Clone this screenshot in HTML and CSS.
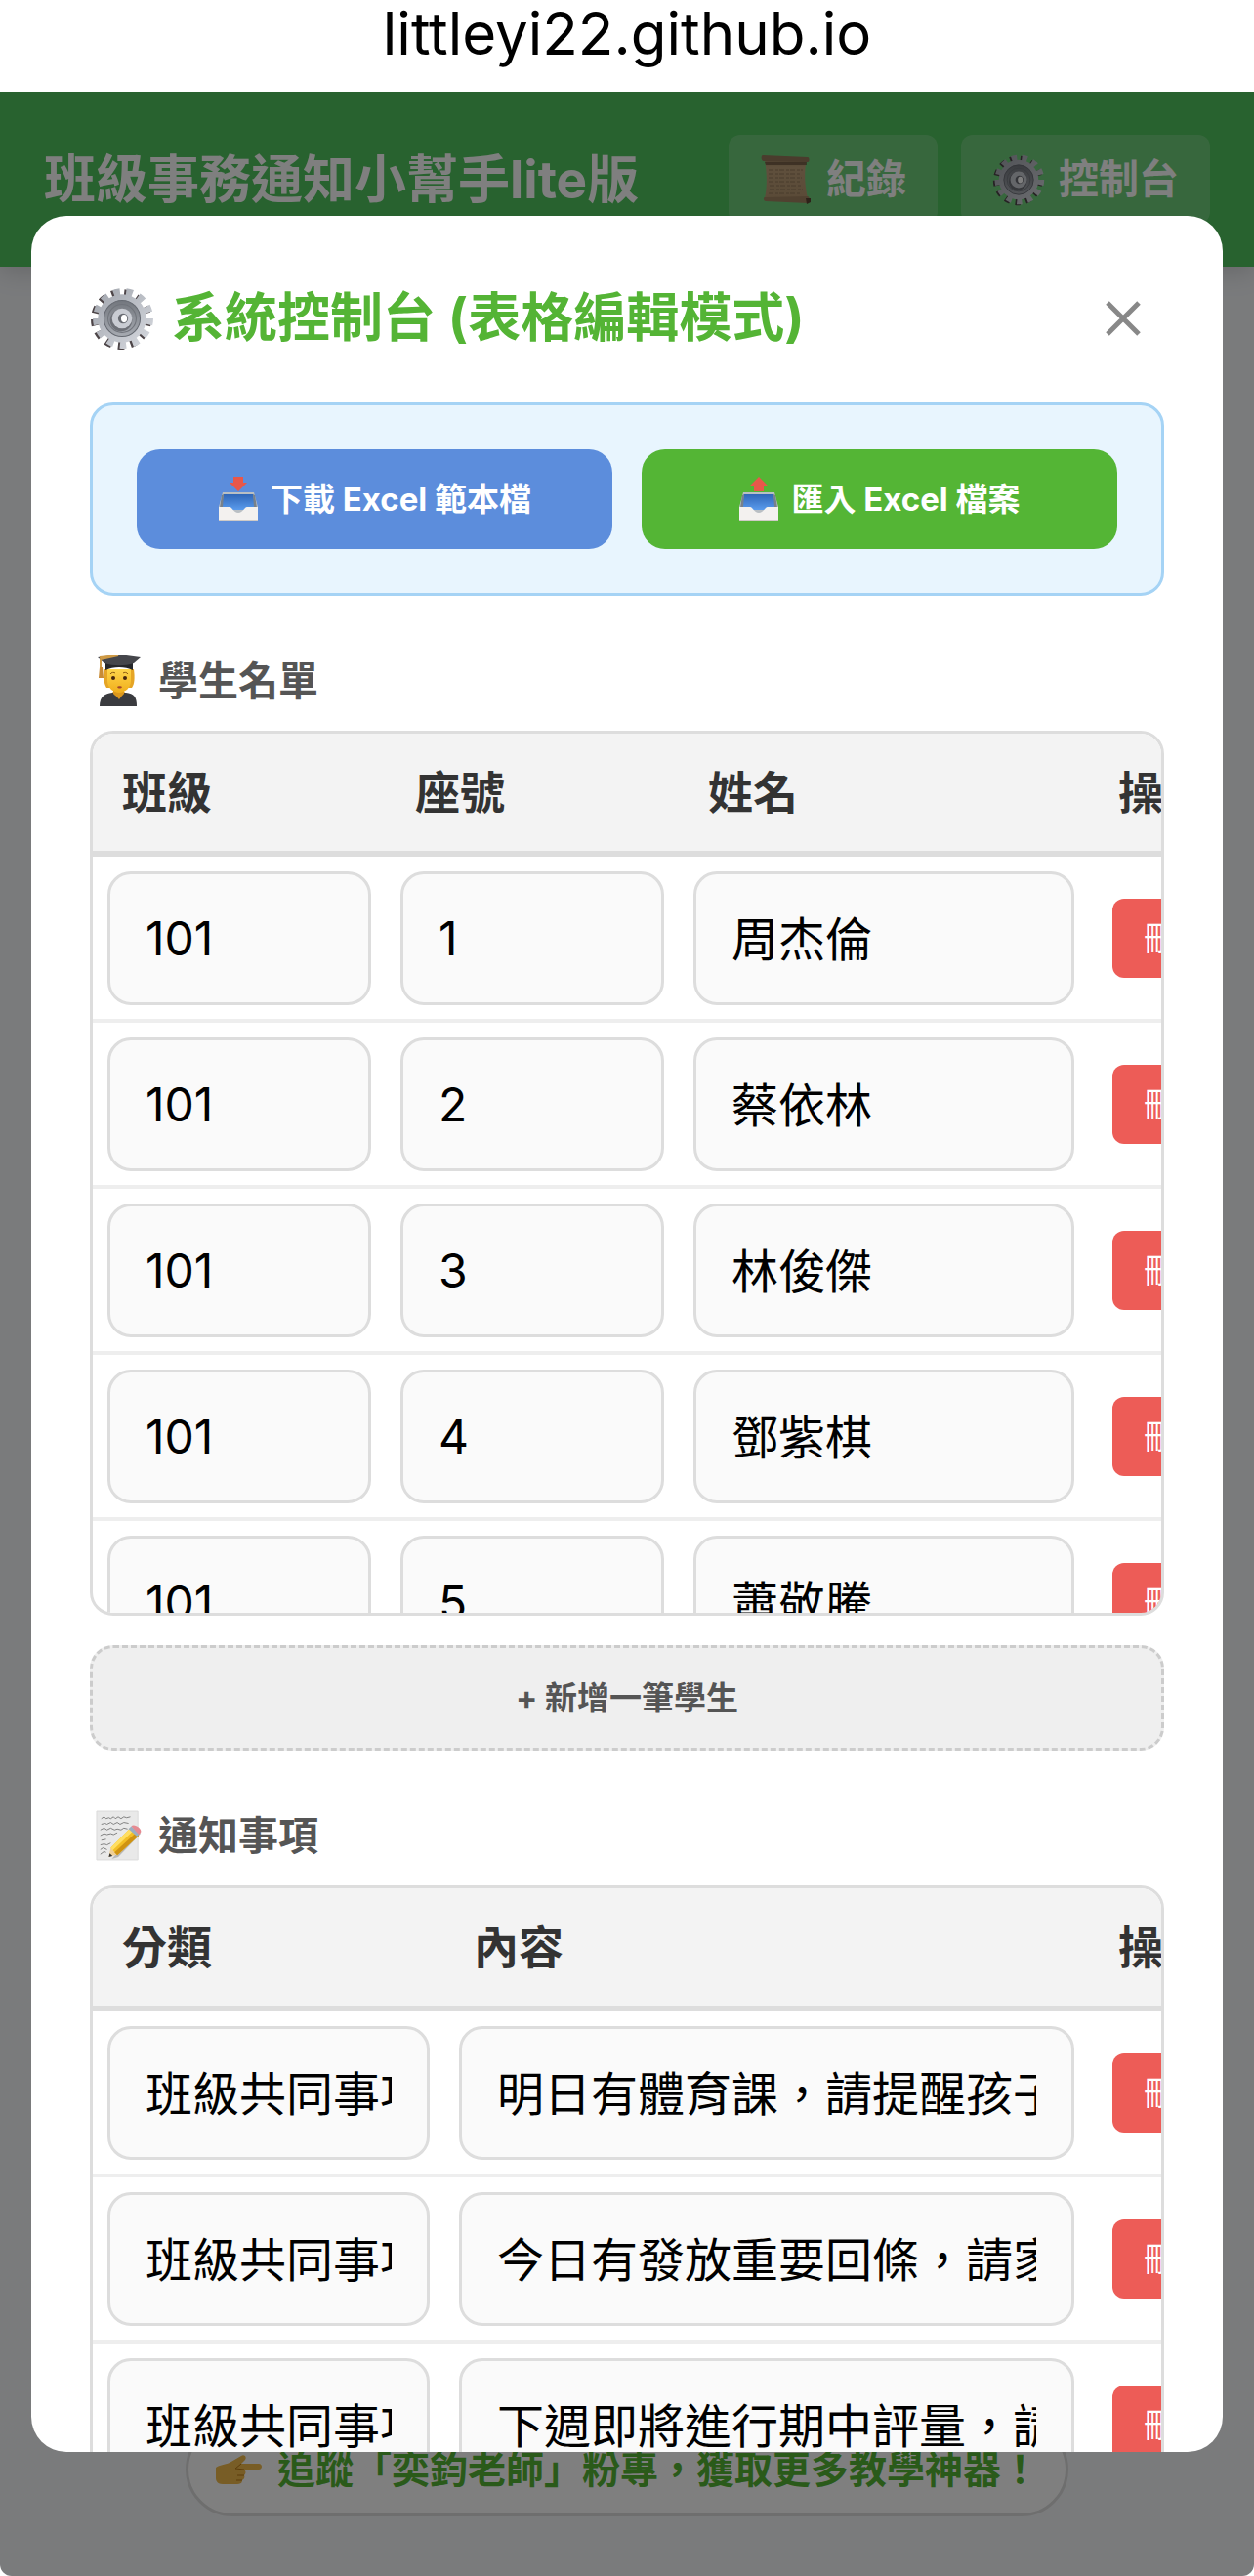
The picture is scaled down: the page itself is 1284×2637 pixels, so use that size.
FILE: index.html
```html
<!DOCTYPE html>
<html lang="zh-Hant">
<head>
  <meta charset="UTF-8" />
  <meta name="viewport" content="width=device-width, initial-scale=1" />
  <title>班級事務通知小幫手lite版</title>
  <link rel="stylesheet" href="styles.css">
</head>
<body>

  <!-- Shared icons -->
  <svg class="sprite" aria-hidden="true">
    <defs>
      <linearGradient id="metal" x1="0" y1="0" x2="1" y2="1">
        <stop offset="0" stop-color="#a4a8b0" />
        <stop offset="1" stop-color="#d3d6dc" />
      </linearGradient>
      <linearGradient id="ring" x1="0" y1="0" x2="0" y2="1">
        <stop offset="0" stop-color="#73777e" />
        <stop offset="1" stop-color="#a7abb2" />
      </linearGradient>
      <linearGradient id="paper" x1="0" y1="0" x2="0" y2="1">
        <stop offset="0" stop-color="#9a8060" />
        <stop offset="0.2" stop-color="#bfa07a" />
        <stop offset="1" stop-color="#b5966f" />
      </linearGradient>
      <linearGradient id="trayBlue" x1="0" y1="0" x2="0" y2="1">
        <stop offset="0" stop-color="#2f66b8" />
        <stop offset="1" stop-color="#5a9bec" />
      </linearGradient>
      <linearGradient id="skin" x1="0" y1="0" x2="0" y2="1">
        <stop offset="0" stop-color="#ffd54a" />
        <stop offset="1" stop-color="#f0ae1c" />
      </linearGradient>
    </defs>

    <symbol id="icon-gear" viewBox="0 0 64 64">
      <g fill="none" stroke-width="10">
        <circle cx="31" cy="33" r="25" stroke="#4d4548" pathLength="26" stroke-dasharray="1 1" />
        <circle cx="33" cy="32" r="25" stroke="url(#metal)" pathLength="26" stroke-dasharray="1 1" />
      </g>
      <circle cx="32" cy="32" r="24" fill="url(#metal)" />
      <circle cx="32" cy="32" r="18" fill="url(#ring)" stroke="#666a72" stroke-width="1" />
      <circle cx="32" cy="32" r="14" fill="none" stroke="#70747b" stroke-width="1" />
      <circle cx="31" cy="34" r="11" fill="#6d7077" />
      <circle cx="32" cy="32" r="10" fill="#c9ccd3" />
      <circle cx="33" cy="32" r="5" fill="#686b72" />
      <ellipse cx="34" cy="32" rx="3" ry="4" fill="#fff" />
    </symbol>

    <symbol id="icon-scroll" viewBox="0 0 54 54">
      <path d="M5 6h43c-3 12-2 27 1 40H5c3-13 2-27 0-40z" fill="url(#paper)" />
      <path d="M3 2l46 2c2 0 2 5 0 5L4 8C1 8 1 2 3 2z" fill="#94785a" />
      <path d="M5 9h43v3H6z" fill="#66503a" opacity=".7" />
      <path d="M5 45l44-1c2 0 3 6 0 7L6 49c-2 0-3-4-1-4z" fill="#a18360" />
      <path d="M47 46h5v4l-4 2z" fill="#5b4533" />
      <path d="M9 17h35M9 21h33M9 25h34M9 29h33M10 33h32M10 37h34M9 41h32" fill="none" stroke="#92785a" stroke-width="1" stroke-dasharray="5 2 3 1" />
    </symbol>

    <symbol id="icon-tray" viewBox="0 0 42 30">
      <path d="M5 0h32l4 15v14H1V15z" fill="#b9bfc4" />
      <path d="M6 2h30l3 16H3z" fill="url(#trayBlue)" />
      <path d="M4 3l2-1-1 13-3 1zM38 3l-2-1 1 13 3 1z" fill="#77818b" />
      <path d="M1 15h11c3 0 4 6 9 6s6-6 9-6h11v14H1z" fill="#f3f1ef" />
      <path d="M1 28h40v1H1z" fill="#cfcac6" />
    </symbol>

    <symbol id="icon-inbox" viewBox="0 0 42 48">
      <path d="M16 1h10v6h4l-9 9-9-9h4z" fill="#e8574a" />
      <use href="#icon-tray" x="0" y="17" width="42" height="30" />
    </symbol>

    <symbol id="icon-outbox" viewBox="0 0 42 48">
      <path d="M16 16h10v-6h4l-9-9-9 9h4z" fill="#e8574a" />
      <use href="#icon-tray" x="0" y="17" width="42" height="30" />
    </symbol>

    <symbol id="icon-student" viewBox="0 0 48 54">
      <path d="M4 53c0-10 5-13 13-14h14c8 1 11 4 11 14z" fill="#3a3b3f" />
      <path d="M17 38h13l-6 8z" fill="#e0981d" />
      <path d="M18 33h11v7c-3 4-8 4-11 0z" fill="#dc981c" />
      <path d="M9 15h30c1 8 1 15-2 19H11c-3-5-3-12-2-19z" fill="#e5a526" />
      <path d="M12 15h24v12c0 7-6 12-12 12s-12-5-12-12z" fill="url(#skin)" />
      <circle cx="18" cy="24" r="2" fill="#47260d" />
      <circle cx="30" cy="24" r="2" fill="#47260d" />
      <path d="M15 20c1-2 4-2 5-1M28 19c1-1 4-1 5 1" fill="none" stroke="#8b5a12" stroke-width="1" />
      <path d="M22 33c1-1 4-1 5 0-1 2-4 2-5 0z" fill="#a4452a" />
      <path d="M10 7h28v9c-8-4-20-4-28 0z" fill="#25262a" />
      <path d="M2 3l22-3 22 3-7 6c-9 3-21 3-30 0z" fill="#45464b" />
      <path d="M4 3l19-2-18 4v9" fill="none" stroke="#cf9a45" stroke-width="2" />
      <path d="M4 13h3l1 11H3z" fill="#c98b35" />
    </symbol>

    <symbol id="icon-memo" viewBox="0 0 50 54">
      <path d="M1 1h44v52H1z" fill="#e9e9e9" stroke="#dadada" stroke-width="1" />
      <path d="M6 9l3-2 2 2 3-1 2 1 3-2 2 2 3-2 3 2 3-2 3 1 4-1M6 15l4-1 2 1 4-2 3 2 4-2 3 2 4-2 5 1M5 21l4-2 3 2 4-2 4 2 3-1 4 1 3-2 4 1M5 27l4-2 3 1 4-1 3 1 4-2M6 32l5-1M5 37l4-1 3 1 4-2M5 42l3-2 4 2M5 47l4-3 2 1" fill="none" stroke="#7d7d7d" stroke-width="1" />
      <path d="M17 52l7-2 24-25-3-3z" fill="#888" opacity=".5" />
      <path d="M14 50l2-10 7 7z" fill="#efcf97" />
      <path d="M14 50l1-4 3 3z" fill="#333" />
      <path d="M16 40l21-21 9 8-23 21z" fill="#f3bf26" />
      <path d="M16 40l21-21 3 3-22 21z" fill="#ffdf63" />
      <path d="M20 45l23-21 3 3-23 21z" fill="#cf9313" />
      <path d="M35 20l3-3 9 8-3 3z" fill="#9caec0" />
      <path d="M38 17c3-3 12 3 10 7l-2 2z" fill="#e58a91" />
    </symbol>

    <symbol id="icon-hand" viewBox="0 0 48 32">
      <path d="M1 14c4-3 9-3 14-5L27 2c3-2 6 1 4 4l-4 4h18c4 0 4 6 0 6H30c2 2 2 4 0 6 1 2 0 4-2 5 0 3-2 4-5 4H8c-5 0-7-3-7-6z" fill="#f0bb4c" />
      <path d="M27 10l-6 5 9 1M30 22h-7M28 27h-6" fill="none" stroke="#b87814" stroke-width="1" />
    </symbol>
  </svg>

  <div class="address-bar">littleyi22.github.io</div>

  <div class="app">
    <header class="app-header">
      <h1>班級事務通知小幫手lite版</h1>
      <div class="header-actions">
        <button type="button" class="header-btn"><svg class="header-icon"><use href="#icon-scroll" /></svg>紀錄</button>
        <button type="button" class="header-btn"><svg class="header-icon"><use href="#icon-gear" /></svg>控制台</button>
      </div>
    </header>

    <footer class="app-footer">
      <a class="follow-link" href="#"><svg class="hand-icon"><use href="#icon-hand" /></svg>追蹤「奕鈞老師」粉專，獲取更多教學神器！</a>
    </footer>

    <!-- Control panel -->
    <div class="overlay">
      <div class="modal" role="dialog" aria-labelledby="modalTitle">
        <div class="modal-header">
          <h2 id="modalTitle"><svg class="title-icon"><use href="#icon-gear" /></svg>系統控制台 (表格編輯模式)</h2>
          <button type="button" class="close-btn" aria-label="關閉">
            <svg class="close-icon" viewBox="0 0 36 36"><path d="M2 2l32 32M34 2L2 34" fill="none" stroke="#888" stroke-width="5" /></svg>
          </button>
        </div>

        <div class="excel-box">
          <button type="button" class="excel-btn download"><svg class="tray-icon"><use href="#icon-inbox" /></svg>下載 Excel 範本檔</button>
          <button type="button" class="excel-btn import"><svg class="tray-icon"><use href="#icon-outbox" /></svg>匯入 Excel 檔案</button>
        </div>

        <h3 class="section-title"><svg class="section-icon"><use href="#icon-student" /></svg>學生名單</h3>
        <div class="table-box">
          <table>
            <colgroup><col class="col-short"><col class="col-short"><col><col class="col-action"></colgroup>
            <thead>
              <tr><th>班級</th><th>座號</th><th>姓名</th><th>操作</th></tr>
            </thead>
            <tbody>
              <tr>
                <td><input type="text" value="101" aria-label="班級"></td>
                <td><input type="text" value="1" aria-label="座號"></td>
                <td><input type="text" class="text-field" value="周杰倫" aria-label="姓名"></td>
                <td class="action"><button type="button" class="delete-btn">刪除</button></td>
              </tr>
              <tr>
                <td><input type="text" value="101" aria-label="班級"></td>
                <td><input type="text" value="2" aria-label="座號"></td>
                <td><input type="text" class="text-field" value="蔡依林" aria-label="姓名"></td>
                <td class="action"><button type="button" class="delete-btn">刪除</button></td>
              </tr>
              <tr>
                <td><input type="text" value="101" aria-label="班級"></td>
                <td><input type="text" value="3" aria-label="座號"></td>
                <td><input type="text" class="text-field" value="林俊傑" aria-label="姓名"></td>
                <td class="action"><button type="button" class="delete-btn">刪除</button></td>
              </tr>
              <tr>
                <td><input type="text" value="101" aria-label="班級"></td>
                <td><input type="text" value="4" aria-label="座號"></td>
                <td><input type="text" class="text-field" value="鄧紫棋" aria-label="姓名"></td>
                <td class="action"><button type="button" class="delete-btn">刪除</button></td>
              </tr>
              <tr>
                <td><input type="text" value="101" aria-label="班級"></td>
                <td><input type="text" value="5" aria-label="座號"></td>
                <td><input type="text" class="text-field" value="蕭敬騰" aria-label="姓名"></td>
                <td class="action"><button type="button" class="delete-btn">刪除</button></td>
              </tr>
            </tbody>
          </table>
        </div>
        <button type="button" class="add-btn">+ 新增一筆學生</button>

        <h3 class="section-title"><svg class="section-icon"><use href="#icon-memo" /></svg>通知事項</h3>
        <div class="table-box">
          <table>
            <colgroup><col class="col-type"><col><col class="col-action"></colgroup>
            <thead>
              <tr><th>分類</th><th>內容</th><th>操作</th></tr>
            </thead>
            <tbody>
              <tr>
                <td><input type="text" class="text-field" value="班級共同事項" aria-label="分類"></td>
                <td><input type="text" class="text-field" value="明日有體育課，請提醒孩子" aria-label="內容"></td>
                <td class="action"><button type="button" class="delete-btn">刪除</button></td>
              </tr>
              <tr>
                <td><input type="text" class="text-field" value="班級共同事項" aria-label="分類"></td>
                <td><input type="text" class="text-field" value="今日有發放重要回條，請家長" aria-label="內容"></td>
                <td class="action"><button type="button" class="delete-btn">刪除</button></td>
              </tr>
              <tr>
                <td><input type="text" class="text-field" value="班級共同事項" aria-label="分類"></td>
                <td><input type="text" class="text-field" value="下週即將進行期中評量，請" aria-label="內容"></td>
                <td class="action"><button type="button" class="delete-btn">刪除</button></td>
              </tr>
            </tbody>
          </table>
        </div>
      </div>
    </div>
  </div>

</body>
</html>
```

FILE: styles.css
```css
* {
  box-sizing: border-box;
}

body {
  margin: 0;
  height: 100vh;
  display: flex;
  flex-direction: column;
  background: white;
  font-family: Inter, "Noto Sans CJK TC", sans-serif;
  color: #333;
}

button,
input {
  font-family: inherit;
}

button {
  border: none;
  cursor: pointer;
}

.sprite {
  position: absolute;
  width: 0;
  height: 0;
}

.address-bar {
  padding-bottom: 26px;
  font-size: 60px;
  line-height: 68px;
  text-align: center;
  color: black;
}

.app {
  position: relative;
  flex: 1;
  min-height: 0;
  display: flex;
  flex-direction: column;
  background: #f4f6f9;
  border-radius: 0 0 12px 12px;
  overflow: hidden;
}

/* Page header */
.app-header {
  display: flex;
  align-items: center;
  justify-content: space-between;
  padding: 44px 45px;
  background: #50c45e;
  box-shadow: 0 6px 24px rgba(0, 0, 0, 0.15);
}

.app-header h1 {
  margin: 0;
  font-size: 53px;
  line-height: 60px;
  white-space: nowrap;
  color: white;
}

.header-actions {
  display: flex;
  gap: 24px;
}

.header-btn {
  display: flex;
  align-items: center;
  gap: 14px;
  padding: 16px 32px;
  border-radius: 12px;
  background: rgba(255, 255, 255, 0.18);
  color: white;
  font-size: 41px;
  font-weight: bold;
  line-height: 59px;
  white-space: nowrap;
}

.header-icon {
  width: 54px;
  height: 54px;
}

/* Footer link */
.app-footer {
  margin-top: auto;
  padding-bottom: 61px;
  text-align: center;
}

.follow-link {
  display: inline-flex;
  align-items: center;
  gap: 16px;
  padding: 17px 27px;
  border: 3px solid #ddd;
  border-radius: 48px;
  background: white;
  color: #54b435;
  font-size: 39px;
  font-weight: bold;
  line-height: 56px;
  text-decoration: none;
  white-space: nowrap;
}

.hand-icon {
  width: 48px;
  height: 32px;
}

/* Modal */
.overlay {
  position: absolute;
  inset: 0;
  display: flex;
  align-items: center;
  justify-content: center;
  padding: 0 32px;
  background: rgba(0, 0, 0, 0.5);
}

.modal {
  width: 100%;
  max-height: 90%;
  padding: 60px;
  border-radius: 36px;
  background: white;
  overflow: auto;
  scrollbar-width: none;
}

.modal-header {
  display: flex;
  align-items: center;
  justify-content: space-between;
  margin-bottom: 41px;
}

.modal-header h2 {
  display: flex;
  align-items: center;
  gap: 18px;
  margin: 0;
  font-size: 54px;
  line-height: 90px;
  color: #54b435;
}

.title-icon {
  width: 66px;
  height: 66px;
}

.close-btn {
  display: flex;
  padding: 24px;
  background: none;
}

.close-icon {
  width: 36px;
  height: 36px;
}

.excel-box {
  display: flex;
  gap: 30px;
  padding: 45px;
  border: 3px solid #a5d3f5;
  border-radius: 24px;
  background: #e8f5fe;
}

.excel-btn {
  flex: 1;
  display: flex;
  align-items: center;
  justify-content: center;
  gap: 12px;
  padding: 27px;
  border-radius: 24px;
  color: white;
  font-size: 33px;
  font-weight: bold;
  line-height: 48px;
}

.download {
  background: #5c8ddc;
}

.import {
  background: #54b535;
}

.tray-icon {
  width: 42px;
  height: 48px;
}

.section-title {
  display: flex;
  align-items: center;
  gap: 16px;
  margin: 58px 0 22px;
  padding-left: 6px;
  font-size: 41px;
  line-height: 58px;
  color: #555;
}

.section-icon {
  width: 48px;
  height: 54px;
}

/* Editable tables */
.table-box {
  max-height: 906px;
  border: 3px solid #ddd;
  border-radius: 24px;
  overflow: auto;
  scrollbar-width: none;
}

table {
  width: 100%;
  min-width: 1200px;
  table-layout: fixed;
  border-collapse: separate;
  border-spacing: 0;
}

.col-short {
  width: 300px;
}

.col-type {
  width: 360px;
}

.col-action {
  width: 180px;
}

th {
  padding: 30px;
  border-bottom: 6px solid #ddd;
  background: #f3f3f3;
  font-size: 46px;
  line-height: 60px;
  text-align: left;
}

td {
  padding: 15px 15px 14px;
  border-bottom: 4px solid #eee;
}

td input {
  display: block;
  width: 100%;
  height: 137px;
  padding: 0 36px;
  border: 3px solid #ddd;
  border-radius: 24px;
  background: #fafafa;
  color: black;
  font-size: 48px;
}

td .text-field {
  padding-bottom: 6px;
}

.action {
  text-align: center;
}

.delete-btn {
  padding: 16px 32px;
  border-radius: 12px;
  background: #ed5c57;
  color: white;
  font-size: 34px;
  line-height: 49px;
  white-space: nowrap;
}

.add-btn {
  width: 100%;
  margin-top: 30px;
  padding: 27px;
  border: 3px dashed #ccc;
  border-radius: 24px;
  background: #efefef;
  color: #555;
  font-size: 33px;
  font-weight: bold;
  line-height: 48px;
}
```
